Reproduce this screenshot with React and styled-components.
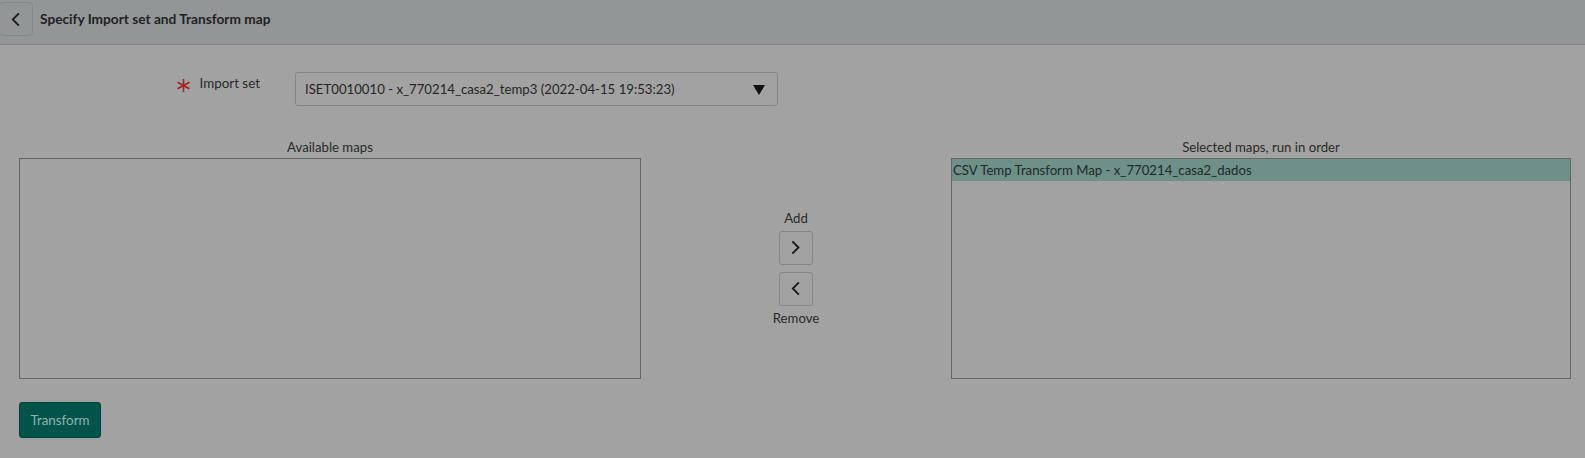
import React from "react";
import styled, { createGlobalStyle } from "styled-components";

const Global = createGlobalStyle`
  html, body { margin: 0; padding: 0; background: #a2a2a2; }
  body { font-family: Lato, "Open Sans", sans-serif; color: #262626; }
  * { box-sizing: border-box; }
`;

const Page = styled.div`
  width: 1585px;
  height: 458px;
  background: #a2a2a2;
  overflow: hidden;
`;

const Header = styled.div`
  height: 45px;
  background: #929697;
  border-bottom: 1px solid #818586;
  display: flex;
  align-items: flex-start;
  gap: 7px;
`;

const BackButton = styled.button`
  margin-top: 2px;
  margin-left: -1px;
  width: 34px;
  height: 34px;
  border: 1px solid #848889;
  border-radius: 4px;
  background: transparent;
  display: flex;
  align-items: center;
  justify-content: center;
  padding: 0;
  color: #1e1e1e;
`;

const Title = styled.h1`
  margin: 0;
  margin-top: 10px;
  font-size: 13.7px;
  font-weight: 700;
  color: #1f2224;
`;

const Content = styled.div`
  padding: 27px 14px 0 19px;
`;

const FieldRow = styled.div`
  display: grid;
  grid-template-columns: 276px 483px;
  align-items: start;
`;

const Label = styled.label`
  display: flex;
  justify-content: flex-end;
  align-items: center;
  gap: 9px;
  padding-right: 35px;
  padding-top: 2px;
  font-size: 13.4px;
  color: #2a2a2a;
`;

const Select = styled.div`
  height: 34px;
  border: 1px solid #858585;
  border-radius: 3px;
  display: flex;
  align-items: center;
  justify-content: space-between;
  padding: 0 12px 0 9px;
  font-size: 13.2px;
  color: #262626;
`;

const Caret = styled.span`
  width: 0;
  height: 0;
  border-left: 6px solid transparent;
  border-right: 6px solid transparent;
  border-top: 10px solid #111;
  margin-top: 2px;
`;

const Maps = styled.div`
  margin-top: 32px;
  display: grid;
  grid-template-columns: 622px 1fr 620px;
  grid-template-rows: 20px 221px;
`;

const ListLabel = styled.div`
  text-align: center;
  font-size: 13.2px;
  color: #2a2a2a;
  line-height: 18px;
`;

const ListBox = styled.div`
  border: 1px solid #666;
  background: #a2a2a2;
`;

const Option = styled.div`
  height: 22px;
  background: #6f9088;
  padding-left: 1px;
  font-size: 13.2px;
  line-height: 22px;
  color: #1e2a28;
`;

const Middle = styled.div`
  grid-row: 2;
  grid-column: 2;
  display: flex;
  flex-direction: column;
  align-items: center;
  justify-content: center;
  gap: 7px;
  padding-bottom: 2px;
  font-size: 13.2px;
  color: #2a2a2a;
`;

const MoveButton = styled.button`
  width: 34px;
  height: 34px;
  border: 1px solid #868686;
  border-radius: 3px;
  background: transparent;
  display: flex;
  align-items: center;
  justify-content: center;
  padding: 0;
  color: #1a1a1a;
`;

const Caption = styled.span`
  line-height: 18px;
  margin: ${(p) => (p.$top ? "0 0 -3px" : "-4px 0 0")};
`;

const Footer = styled.div`
  margin-top: 23px;
`;

const Primary = styled.button`
  width: 82px;
  height: 36px;
  background: #02544a;
  border: 1px solid #03403a;
  border-radius: 3px;
  color: #92b2ad;
  font-family: Lato, "Open Sans", sans-serif;
  font-size: 13.4px;
  padding: 0;
`;

const Chevron = ({ dir, size = 14 }) => (
  <svg width={size * 0.75} height={size} viewBox="0 0 12 16" fill="none">
    <path
      d={dir === "left" ? "M9.5 1.5 L3 8 L9.5 14.5" : "M2.5 1.5 L9 8 L2.5 14.5"}
      stroke="currentColor"
      strokeWidth="2"
    />
  </svg>
);

const Asterisk = () => (
  <svg width="15" height="13" viewBox="0 0 15 13" style={{ marginTop: 5 }}>
    <g stroke="#a32222" strokeWidth="1.6" strokeLinecap="butt">
      <line x1="7.5" y1="0" x2="7.5" y2="13" />
      <line x1="1.5" y1="3.2" x2="13.5" y2="9.8" />
      <line x1="1.5" y1="9.8" x2="13.5" y2="3.2" />
    </g>
  </svg>
);

export default function App() {
  return (
    <Page>
      <Global />
      <Header>
        <BackButton aria-label="Back">
          <Chevron dir="left" size={15} />
        </BackButton>
        <Title>Specify Import set and Transform map</Title>
      </Header>
      <Content>
        <FieldRow>
          <Label>
            <Asterisk />
            Import set
          </Label>
          <Select>
            <span>ISET0010010 - x_770214_casa2_temp3 (2022-04-15 19:53:23)</span>
            <Caret />
          </Select>
        </FieldRow>
        <Maps>
          <ListLabel>Available maps</ListLabel>
          <div />
          <ListLabel>Selected maps, run in order</ListLabel>
          <ListBox />
          <Middle>
            <Caption $top>Add</Caption>
            <MoveButton aria-label="Add">
              <Chevron dir="right" size={15} />
            </MoveButton>
            <MoveButton aria-label="Remove">
              <Chevron dir="left" size={15} />
            </MoveButton>
            <Caption>Remove</Caption>
          </Middle>
          <ListBox>
            <Option>CSV Temp Transform Map - x_770214_casa2_dados</Option>
          </ListBox>
        </Maps>
        <Footer>
          <Primary>Transform</Primary>
        </Footer>
      </Content>
    </Page>
  );
}
